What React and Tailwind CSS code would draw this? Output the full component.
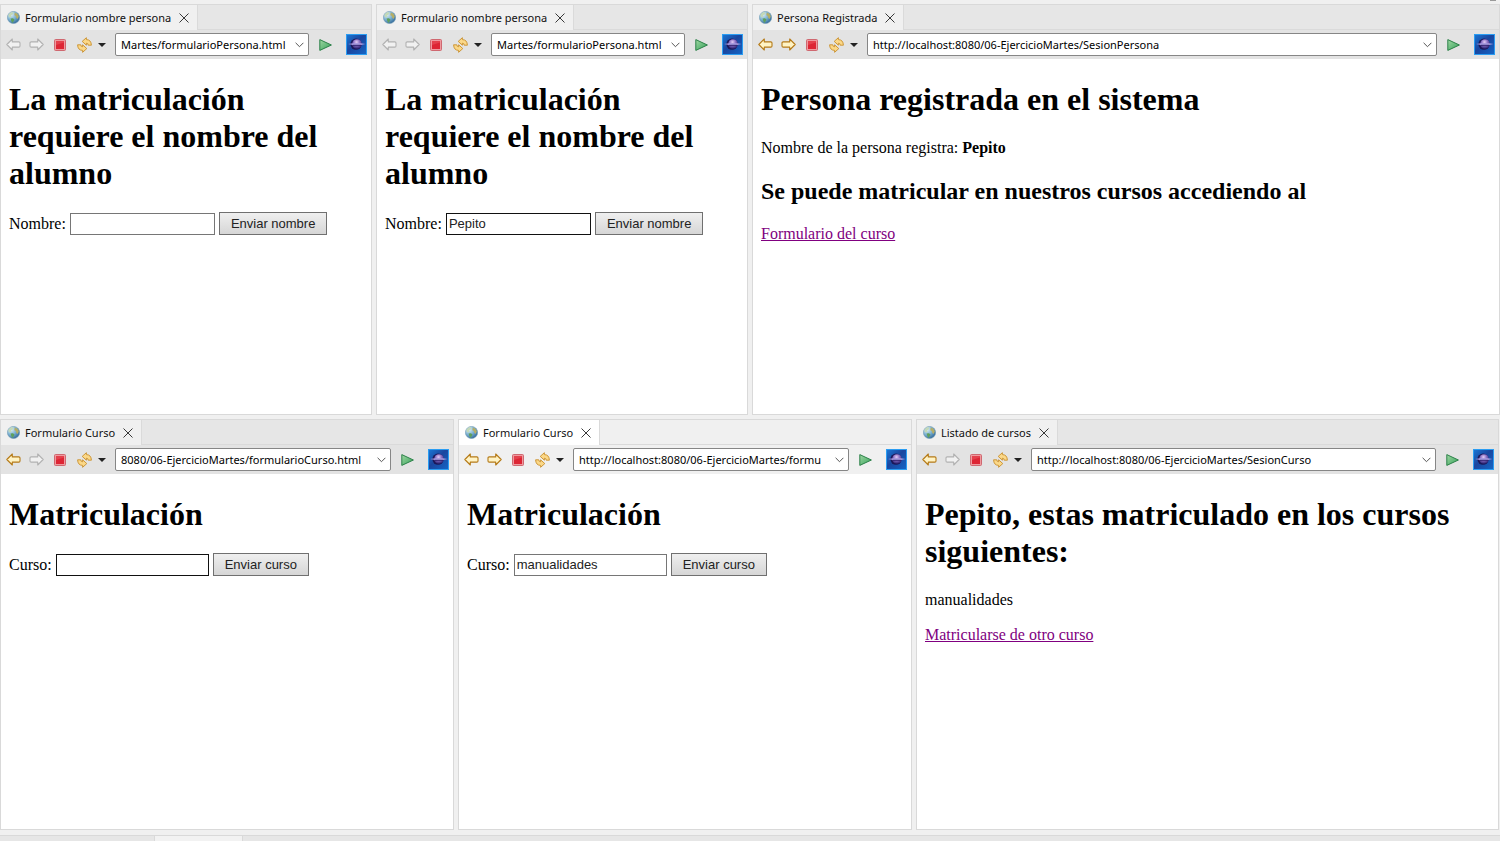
import React, { useId } from "react";

function Globe() {
  const id = useId();
  return (
    <svg width="13" height="13" viewBox="0 0 13 13" className="shrink-0" aria-hidden="true">
      <defs>
        <radialGradient id={id} cx="0.3" cy="0.25" r="0.85">
          <stop offset="0" stopColor="#e2f0f7" />
          <stop offset="0.5" stopColor="#7db2d2" />
          <stop offset="1" stopColor="#2a6193" />
        </radialGradient>
      </defs>
      <circle cx="6.5" cy="6.5" r="6.1" fill={`url(#${id})`} stroke="#6b98b2" strokeWidth="0.6" />
      <path d="M1.5 3.5 4 1.2 6.5 1.5 5.8 3.4 4 4.2 4.6 5.5 3.4 6.6 1.8 5.9Z" fill="#c3d9b8" />
      <path d="M7.8 1.6 10.4 2.8 11.8 5.2 10.7 8 9.2 6.8 8.8 5 7.3 4.2Z" fill="#b5ae66" />
      <path d="M3.6 7.4 6 7.2 7.6 8.7 6.4 10.5 5.6 12 4.3 10Z" fill="#5fa05c" />
    </svg>
  );
}

function CloseIcon() {
  return (
    <svg width="10" height="10" viewBox="0 0 10 10" aria-hidden="true">
      <path d="M0.5 0.5 9.5 9.5M9.5 0.5 0.5 9.5" stroke="#222" strokeWidth="0.9" fill="none" />
    </svg>
  );
}

function Arrow({ forward, enabled }) {
  return (
    <svg width="15" height="13" viewBox="0 0 15 13" aria-hidden="true">
      <path
        d={
          forward
            ? "M14.2 6.5 8.7 1V3.9H2.2Q1 3.9 1 5V8Q1 9.1 2.2 9.1H8.7V12Z"
            : "M0.8 6.5 6.3 1V3.9H12.8Q14 3.9 14 5V8Q14 9.1 12.8 9.1H6.3V12Z"
        }
        fill={enabled ? "#fff3c4" : "#f1f1f1"}
        stroke={enabled ? "#b57a17" : "#b2b2b2"}
        strokeWidth="1.1"
        strokeLinejoin="round"
      />
    </svg>
  );
}

function StopIcon() {
  return (
    <svg width="12" height="12" viewBox="0 0 12 12" aria-hidden="true">
      <rect x="0.5" y="0.5" width="11" height="11" rx="1" fill="#ef9a9f" stroke="#cf6870" />
      <rect x="2" y="2" width="8" height="8" fill="#dd2534" />
      <path d="M2 2H10V3.5L2 6Z" fill="#e4404c" />
    </svg>
  );
}

function RefreshIcon() {
  return (
    <svg width="15" height="16" viewBox="0 0 15 16" aria-hidden="true">
      <g fill="#fbd888" stroke="#c9902c" strokeWidth="0.9" strokeLinejoin="round">
        <path d="M5.2 4.4 9.4 0.7V2.6Q14.2 2.7 14.4 8.2H11.2Q11.2 6.2 9.4 6.2V8.2Z" />
        <path d="M9.8 11.6 5.6 15.3V13.4Q0.8 13.3 0.6 7.8H3.8Q3.8 9.8 5.6 9.8V7.8Z" />
      </g>
    </svg>
  );
}

function PlayIcon() {
  const id = useId();
  return (
    <svg width="13" height="12" viewBox="0 0 13 12" aria-hidden="true">
      <defs>
        <linearGradient id={id} x1="0" y1="0" x2="1" y2="1">
          <stop offset="0" stopColor="#9fd6a2" />
          <stop offset="1" stopColor="#35a35a" />
        </linearGradient>
      </defs>
      <path d="M0.8 0.6 12.4 6 0.8 11.4Z" fill={`url(#${id})`} stroke="#2c8049" strokeWidth="1" strokeLinejoin="round" />
    </svg>
  );
}

function EclipseLogo() {
  const id = useId();
  return (
    <svg width="21" height="21" viewBox="0 0 21 21" className="shrink-0" role="img" aria-label="Eclipse">
      <defs>
        <radialGradient id={id + "s"} cx="0.45" cy="0.3" r="0.7">
          <stop offset="0" stopColor="#e3cdf5" />
          <stop offset="0.45" stopColor="#8a70c4" />
          <stop offset="1" stopColor="#2a2070" />
        </radialGradient>
        <linearGradient id={id + "b"} x1="0" y1="0" x2="1" y2="1">
          <stop offset="0" stopColor="#1a78d6" />
          <stop offset="0.45" stopColor="#1a469f" />
          <stop offset="1" stopColor="#1466c6" />
        </linearGradient>
      </defs>
      <rect x="0.5" y="0.5" width="20" height="20" fill={`url(#${id}b)`} stroke="#2b9df2" />
      <circle cx="10" cy="10.2" r="5.6" fill="#1b1758" />
      <circle cx="11" cy="10" r="4.8" fill={`url(#${id}s)`} />
      <path d="M2 10 7 9.2H15L19.5 10 15 10.9H7Z" fill="#a79be0" />
      <path d="M7 11.3H15" stroke="#2a1d68" strokeWidth="0.9" />
    </svg>
  );
}

function ToolButton({ label, disabled, className, children }) {
  return (
    <button type="button" aria-label={label} disabled={disabled} className={"flex shrink-0 items-center justify-center " + (className || "")}>
      {children}
    </button>
  );
}

function Browser({ title, url, back, forward, active, children }) {
  return (
    <section className="flex min-w-0 flex-col border border-[#d9d9d9] bg-white">
      <div className={"flex h-[25px] shrink-0 " + (active ? "bg-[#f0f0f0]" : "bg-[#e6e6e6]")}>
        <div className={"flex items-center border-r border-[#dadada] pr-2 pl-[6px] " + (active ? "bg-white" : "bg-[#f0f0f0]")}>
          <Globe />
          <span className="ml-[5px] text-[11px] leading-4 whitespace-nowrap text-[#111]">{title}</span>
          <ToolButton label="Cerrar" className="ml-2">
            <CloseIcon />
          </ToolButton>
        </div>
        <div className="flex-1 border-b border-[#dadada]" />
      </div>
      <div className={"flex h-[29px] shrink-0 items-center pr-1 pl-[5px] " + (active ? "bg-[#f0f0f0]" : "bg-[#e3e3e3]")}>
        <ToolButton label="Atrás" disabled={!back}>
          <Arrow enabled={back} />
        </ToolButton>
        <ToolButton label="Adelante" disabled={!forward} className="ml-2">
          <Arrow forward enabled={forward} />
        </ToolButton>
        <ToolButton label="Detener" className="ml-[10px]">
          <StopIcon />
        </ToolButton>
        <ToolButton label="Actualizar" className="ml-[11px]">
          <RefreshIcon />
        </ToolButton>
        <ToolButton label="Más opciones" className="ml-[6px]">
          <svg width="8" height="4" viewBox="0 0 8 4" aria-hidden="true">
            <path d="M0 0H8L4 4Z" fill="#222" />
          </svg>
        </ToolButton>
        <div className="ml-[9px] flex h-[23px] min-w-0 flex-1 items-center rounded-[2px] border border-[#868686] bg-white pr-1 pl-[5px]">
          <input
            type="text"
            aria-label="Dirección"
            defaultValue={url}
            className="min-w-0 flex-1 text-[11px] leading-4 text-black outline-none"
          />
          <ToolButton label="Historial" className="ml-1">
            <svg width="9" height="6" viewBox="0 0 9 6" aria-hidden="true">
              <path d="M0.6 0.8 4.5 4.7 8.4 0.8" stroke="#555" strokeWidth="1" fill="none" />
            </svg>
          </ToolButton>
        </div>
        <ToolButton label="Ir" className="mr-[14px] ml-[10px]">
          <PlayIcon />
        </ToolButton>
        <EclipseLogo />
      </div>
      <div className="flex-1 px-2 pt-[22px] font-['Liberation_Serif',serif] text-[16px] leading-[18px] text-black">{children}</div>
    </section>
  );
}

function H1({ children }) {
  return <h1 className="mb-5 text-[32px] leading-[37px] font-bold">{children}</h1>;
}

function Field({ label, value, button, width, focused }) {
  const id = useId();
  return (
    <form className="flex items-center" onSubmit={(e) => e.preventDefault()}>
      <label htmlFor={id}>{label}</label>
      <input
        id={id}
        type="text"
        defaultValue={value}
        className={
          "ml-1 h-[22px] border bg-white px-[2px] font-['Liberation_Sans',Arial,sans-serif] text-[13px] text-[#222] outline-none " +
          width +
          (focused ? " border-[#111]" : " border-[#767676]")
        }
      />
      <button
        type="submit"
        className="ml-1 h-[23px] border border-[#707070] bg-linear-to-b from-[#efefef] to-[#d6d6d6] px-[11px] font-['Liberation_Sans',Arial,sans-serif] text-[13px] whitespace-nowrap text-[#222]"
      >
        {button}
      </button>
    </form>
  );
}

function VisitedLink({ children }) {
  return (
    <a href="#" className="text-[#800080] underline">
      {children}
    </a>
  );
}

export default function App() {
  return (
    <div className="flex min-h-screen flex-col bg-[#f0f0f0] font-['Noto_Sans',sans-serif]">
      <div className="flex h-1 shrink-0 justify-end pr-1">
        <div className="h-px w-[6px] bg-[#999]" />
      </div>
      <main className="grid flex-1 grid-rows-2 gap-1">
        <div className="grid grid-cols-[372fr_372fr_748fr] gap-1">
          <Browser title="Formulario nombre persona" url="Martes/formularioPersona.html">
            <H1>La matriculación requiere el nombre del alumno</H1>
            <Field label="Nombre:" value="" button="Enviar nombre" width="w-[145px]" />
          </Browser>
          <Browser title="Formulario nombre persona" url="Martes/formularioPersona.html">
            <H1>La matriculación requiere el nombre del alumno</H1>
            <Field label="Nombre:" value="Pepito" button="Enviar nombre" width="w-[145px]" focused />
          </Browser>
          <Browser title="Persona Registrada" url="http://localhost:8080/06-EjercicioMartes/SesionPersona" back forward>
            <H1>Persona registrada en el sistema</H1>
            <p className="leading-5">
              Nombre de la persona registra: <b>Pepito</b>
            </p>
            <h2 className="my-5 text-[24px] leading-[27px] font-bold">Se puede matricular en nuestros cursos accediendo al</h2>
            <VisitedLink>Formulario del curso</VisitedLink>
          </Browser>
        </div>
        <div className="grid grid-cols-[454fr_454fr_583fr] gap-1 pr-px">
          <Browser title="Formulario Curso" url="8080/06-EjercicioMartes/formularioCurso.html" back>
            <H1>Matriculación</H1>
            <Field label="Curso:" value="" button="Enviar curso" width="w-[153px]" focused />
          </Browser>
          <Browser title="Formulario Curso" url="http://localhost:8080/06-EjercicioMartes/formu" back forward active>
            <H1>Matriculación</H1>
            <Field label="Curso:" value="manualidades" button="Enviar curso" width="w-[153px]" />
          </Browser>
          <Browser title="Listado de cursos" url="http://localhost:8080/06-EjercicioMartes/SesionCurso" back>
            <H1>Pepito, estas matriculado en los cursos siguientes:</H1>
            <p className="mb-4 leading-5">manualidades</p>
            <VisitedLink>Matricularse de otro curso</VisitedLink>
          </Browser>
        </div>
      </main>
      <footer className="mt-[5px] flex h-[6px] shrink-0 border-t border-[#d9d9d9] bg-[#e6e6e6]">
        <div className="ml-[154px] w-[89px] border-x border-[#d9d9d9] bg-[#f2f2f2]" />
      </footer>
    </div>
  );
}
